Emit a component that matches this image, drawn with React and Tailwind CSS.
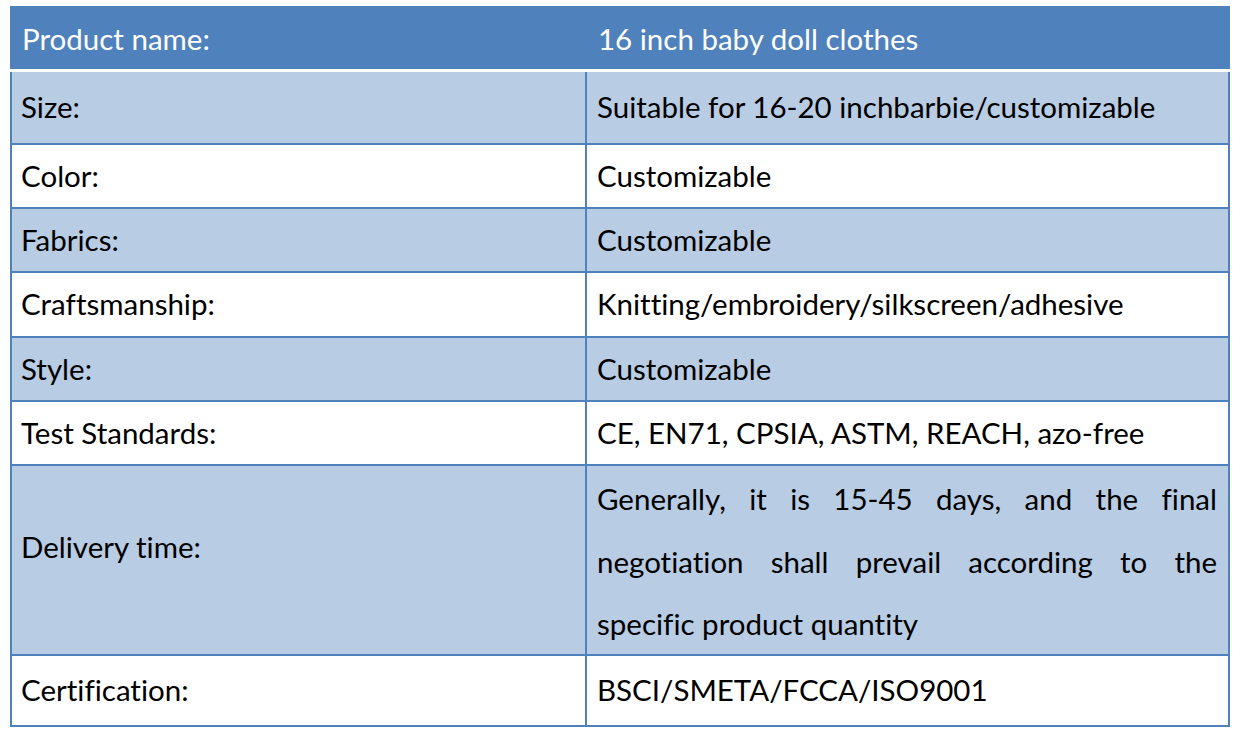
export default function App() {
  const rows = [
    { k: "Size:", v: "Suitable for 16-20 inchbarbie/customizable", h: "h-[73px]", shade: true },
    { k: "Color:", v: "Customizable", h: "h-[64px]", shade: false },
    { k: "Fabrics:", v: "Customizable", h: "h-[64px]", shade: true },
    { k: "Craftsmanship:", v: "Knitting/embroidery/silkscreen/adhesive", h: "h-[65px]", shade: false },
    { k: "Style:", v: "Customizable", h: "h-[64px]", shade: true },
    { k: "Test Standards:", v: "CE, EN71, CPSIA, ASTM, REACH, azo-free", h: "h-[64px]", shade: false },
  ];
  return (
    <div className="w-[1238px] h-[736px] bg-white pt-[6px] pl-[10px] [font-variant-ligatures:none]" style={{ fontFamily: "Lato, 'Open Sans', sans-serif" }}>
      <div className="w-[1220px] flex flex-col">
        <div className="h-[60px] bg-[#4f81bd] flex items-center text-white text-[29.5px] border-b-[3px] border-white box-content pt-[3px]">
          <div className="w-[577px] pl-[12px]">Product name:</div>
          <div className="pl-[11px]">16 inch baby doll clothes</div>
        </div>
        <div className="border-x-2 border-[#4f81bd]">
          {rows.map((r, i) => (
            <div key={i} className={`flex text-[29.5px] text-black border-b-2 border-[#4f81bd] ${r.h} ${r.shade ? "bg-[#b8cce4]" : "bg-white"}`}>
              <div className="w-[575px] border-r-2 border-[#4f81bd] flex items-center pl-[9px]">{r.k}</div>
              <div className="flex-1 flex items-center pl-[10px]">{r.v}</div>
            </div>
          ))}
          <div className="flex text-[29.5px] text-black border-b-2 border-[#4f81bd] h-[190px] bg-[#b8cce4]">
            <div className="w-[575px] border-r-2 border-[#4f81bd] flex items-center pl-[9px] pb-[26px]">Delivery time:</div>
            <div className="flex-1 flex items-center pl-[10px] pr-[11px] pt-[4px]">
              <p className="text-justify leading-[62.5px] w-full">
                Generally, it is 15-45 days, and the final negotiation shall prevail according to the specific product quantity
              </p>
            </div>
          </div>
          <div className="flex text-[29.5px] text-black border-b-2 border-[#4f81bd] h-[71px] bg-white">
            <div className="w-[575px] border-r-2 border-[#4f81bd] flex items-center pl-[9px]">Certification:</div>
            <div className="flex-1 flex items-center pl-[10px]">BSCI/SMETA/FCCA/ISO9001</div>
          </div>
        </div>
      </div>
    </div>
  );
}
